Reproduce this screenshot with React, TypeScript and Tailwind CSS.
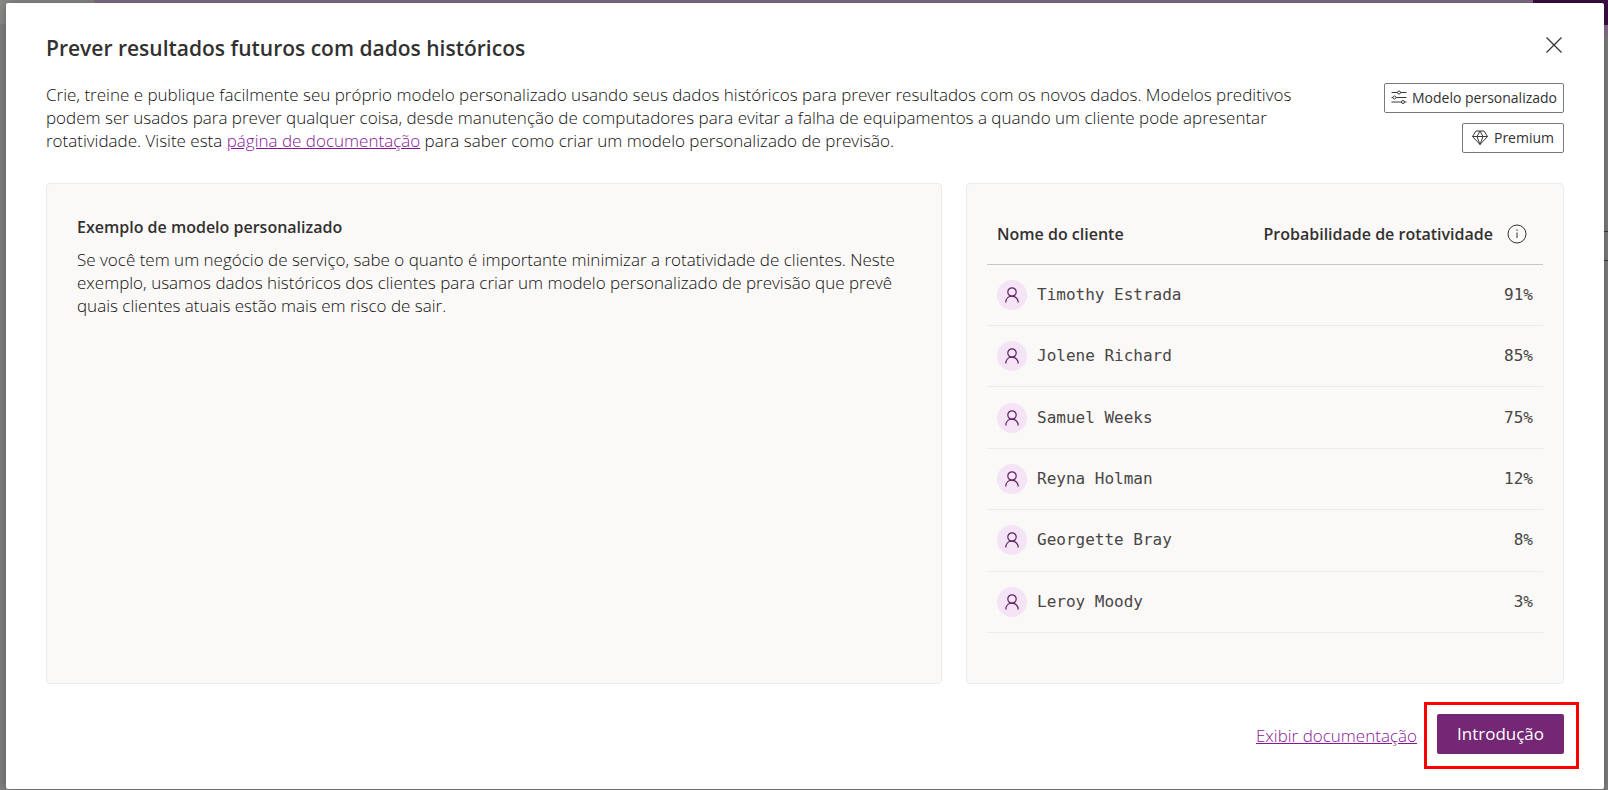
import React from 'react';

const customers = [
  { name: 'Timothy Estrada', churn: '91%' },
  { name: 'Jolene Richard', churn: '85%' },
  { name: 'Samuel Weeks', churn: '75%' },
  { name: 'Reyna Holman', churn: '12%' },
  { name: 'Georgette Bray', churn: '8%' },
  { name: 'Leroy Moody', churn: '3%' },
];

const SlidersIcon = () => (
  <svg width="16" height="16" viewBox="0 0 16 16" fill="none" stroke="#3b3a39" aria-hidden="true">
    <path d="M0.5 2.5H6.5M9.5 2.5H15.5M0.5 7.5H2M5 7.5H15.5M0.5 12H10.5M13.5 12H15.5" />
    <circle cx="8" cy="2.5" r="1.5" />
    <circle cx="3.5" cy="7.5" r="1.5" />
    <circle cx="12" cy="12" r="1.5" />
  </svg>
);

const DiamondIcon = () => (
  <svg width="16" height="16" viewBox="0 0 16 16" fill="none" stroke="#3b3a39" strokeLinejoin="round" aria-hidden="true">
    <path d="M4 1H12L15.5 6.5L8 14.5L0.5 6.5ZM0.5 6.5H15.5M8 1L5 6.5L8 14.5L11 6.5L8 1" />
  </svg>
);

const PersonIcon = () => (
  <svg width="14" height="16" viewBox="0 0 14 16" fill="none" stroke="#5c2360" strokeWidth="1.2" aria-hidden="true">
    <circle cx="7" cy="5" r="4.2" />
    <path d="M0.8 15.5C0.8 11.8 3.4 9.2 7 9.2S13.2 11.8 13.2 15.5" />
  </svg>
);

const InfoIcon = () => (
  <svg width="20" height="20" viewBox="0 0 20 20" fill="none" stroke="#323130" aria-hidden="true">
    <circle cx="10" cy="10" r="9" />
    <path d="M10 8.5V14M10 5.5V7" />
  </svg>
);

const CloseIcon = () => (
  <svg width="16" height="16" viewBox="0 0 16 16" fill="none" stroke="#323130" strokeWidth="1.2" aria-hidden="true">
    <path d="M0.5 0.5L15.5 15.5M15.5 0.5L0.5 15.5" />
  </svg>
);

export default function App() {
  return (
    <div className="relative min-h-screen bg-[#7f7f7f] font-['Open_Sans','Noto_Sans',sans-serif] text-[#323130]">
      {/* page behind the dialog */}
      <div className="absolute inset-x-0 top-0 flex">
        <div className="h-6 w-[94px] bg-[#8a8a88]" />
        <div className="h-6 flex-1 bg-[#85718a]" />
        <div className="w-[75px]">
          <div className="h-[25px] bg-[#3b0f44]" />
          <div className="h-[10px] bg-[#8b6f8f]" />
          <div className="mt-[196px] h-[30px] border-y border-[#3a3a3a]" />
        </div>
      </div>

      <div className="relative flex min-h-screen pt-[3px] pr-1 pb-px pl-[6px]">
        <div role="dialog" aria-labelledby="dialog-title" className="flex flex-1 flex-col rounded-[2px] bg-white px-10 pt-7 shadow-[0_0_12px_rgba(0,0,0,0.3)]">
          <div className="flex items-start justify-between">
            <h1 id="dialog-title" className="text-[21px] leading-[34px] font-semibold">Prever resultados futuros com dados históricos</h1>
            <button type="button" aria-label="Fechar" className="-mr-1 p-[6px]"><CloseIcon /></button>
          </div>

          <div className="mt-[18px] flex items-start justify-between">
            <p className="text-[17px] leading-[23px] font-light whitespace-nowrap text-[#11100f]">
              Crie, treine e publique facilmente seu próprio modelo personalizado usando seus dados históricos para prever resultados com os novos dados. Modelos preditivos<br />
              podem ser usados para prever qualquer coisa, desde manutenção de computadores para evitar a falha de equipamentos a quando um cliente pode apresentar<br />
              rotatividade. Visite esta <a href="#docs" className="text-[#881798] underline">página de documentação</a> para saber como criar um modelo personalizado de previsão.
            </p>
            <div className="flex flex-col items-end gap-[10px] text-sm">
              <span className="flex h-[30px] items-center gap-[5px] rounded-[2px] border border-[#7a7978] px-[6px] whitespace-nowrap"><SlidersIcon />Modelo personalizado</span>
              <span className="flex h-[30px] items-center gap-[6px] rounded-[2px] border border-[#7a7978] px-[9px]"><DiamondIcon />Premium</span>
            </div>
          </div>

          <div className="mt-[30px] flex gap-6">
            <section className="h-[501px] min-w-0 flex-[3] rounded-[4px] border border-[#edebe9] bg-[#faf9f8] px-[30px] pt-[31px]">
              <h2 className="text-base leading-6 font-semibold">Exemplo de modelo personalizado</h2>
              <p className="mt-[9px] text-[17px] leading-[23px] font-light whitespace-nowrap text-[#11100f]">
                Se você tem um negócio de serviço, sabe o quanto é importante minimizar a rotatividade de clientes. Neste<br />
                exemplo, usamos dados históricos dos clientes para criar um modelo personalizado de previsão que prevê<br />
                quais clientes atuais estão mais em risco de sair.
              </p>
            </section>

            <section className="h-[501px] min-w-0 flex-[2] rounded-[4px] border border-[#edebe9] bg-[#faf9f8] px-5 pt-5">
              <table className="h-[429px] w-full border-collapse">
                <thead>
                  <tr className="h-[60px] border-b border-[#c8c6c4] text-base">
                    <th className="px-[10px] text-left font-semibold">Nome do cliente</th>
                    <th className="px-[10px] font-semibold">
                      <span className="flex items-center justify-end gap-[14px] pr-[6px]">Probabilidade de rotatividade <InfoIcon /></span>
                    </th>
                  </tr>
                </thead>
                <tbody className="font-['DejaVu_Sans_Mono',monospace] text-base text-[#484644]">
                  {customers.map((c) => (
                    <tr key={c.name} className="border-b border-[#edebe9]">
                      <td className="px-[10px]">
                        <div className="flex items-center gap-[10px]">
                          <span className="flex size-[30px] items-center justify-center rounded-full bg-[#f5e3f6]"><PersonIcon /></span>
                          {c.name}
                        </div>
                      </td>
                      <td className="px-[10px] text-right">{c.churn}</td>
                    </tr>
                  ))}
                </tbody>
              </table>
            </section>
          </div>

          <div className="mt-[18px] -mr-[15px] flex items-center justify-end gap-[7px] text-[17px]">
            <a href="#docs" className="font-light text-[#881798] underline">Exibir documentação</a>
            <div className="border-[3px] border-[#ff0000] pt-[9px] pr-3 pb-3 pl-[10px]">
              <button type="button" className="h-10 w-[127px] rounded-[2px] bg-[#742774] text-white">Introdução</button>
            </div>
          </div>
        </div>
      </div>
    </div>
  );
}
